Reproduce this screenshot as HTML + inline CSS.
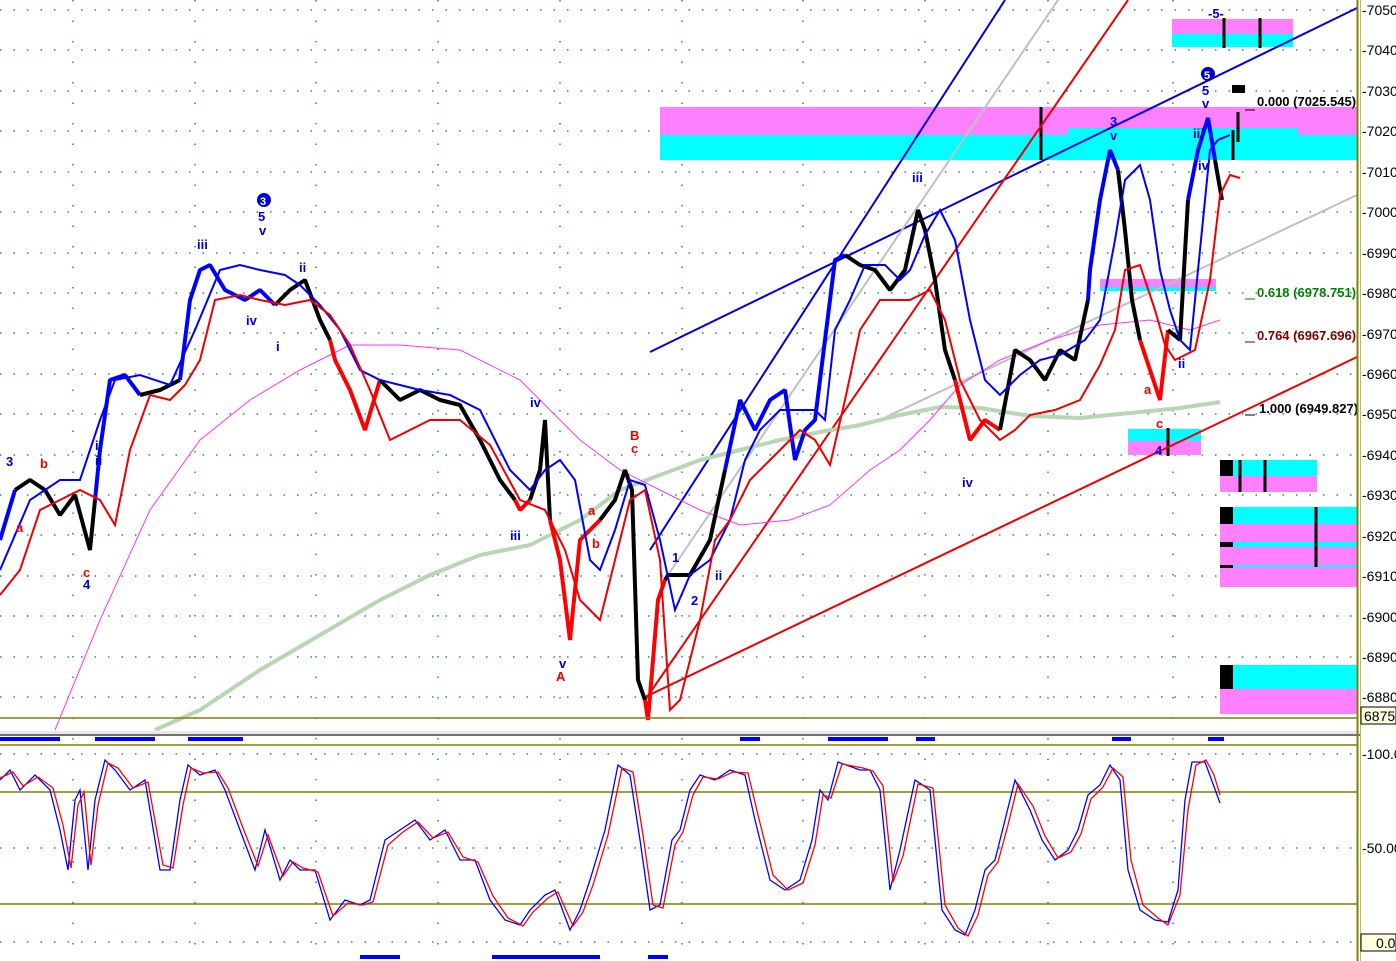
<!DOCTYPE html>
<html><head><meta charset="utf-8"><style>
html,body{margin:0;padding:0;background:#fff;}
svg{display:block;font-family:"Liberation Sans",sans-serif;}
</style></head><body>
<svg width="1396" height="961" viewBox="0 0 1396 961" xmlns="http://www.w3.org/2000/svg">
<rect width="1396" height="961" fill="#fff"/>
<g stroke="#2a8a8a" stroke-width="1.5" stroke-dasharray="1.5,12">
<line x1="0" y1="10" x2="1357" y2="10"/><line x1="0" y1="50" x2="1357" y2="50"/><line x1="0" y1="91" x2="1357" y2="91"/><line x1="0" y1="131" x2="1357" y2="131"/><line x1="0" y1="172" x2="1357" y2="172"/><line x1="0" y1="212" x2="1357" y2="212"/><line x1="0" y1="253" x2="1357" y2="253"/><line x1="0" y1="293" x2="1357" y2="293"/><line x1="0" y1="333" x2="1357" y2="333"/><line x1="0" y1="374" x2="1357" y2="374"/><line x1="0" y1="414" x2="1357" y2="414"/><line x1="0" y1="455" x2="1357" y2="455"/><line x1="0" y1="495" x2="1357" y2="495"/><line x1="0" y1="535" x2="1357" y2="535"/><line x1="0" y1="576" x2="1357" y2="576"/><line x1="0" y1="616" x2="1357" y2="616"/><line x1="0" y1="657" x2="1357" y2="657"/><line x1="0" y1="697" x2="1357" y2="697"/>
<line x1="0" y1="754" x2="1357" y2="754"/><line x1="0" y1="848" x2="1357" y2="848"/><line x1="0" y1="942" x2="1357" y2="942"/>
</g>
<g stroke="#2a8a8a" stroke-width="1.5" stroke-dasharray="1.5,19">
<line x1="73" y1="0" x2="73" y2="961"/><line x1="195" y1="0" x2="195" y2="961"/><line x1="316" y1="0" x2="316" y2="961"/><line x1="438" y1="0" x2="438" y2="961"/><line x1="560" y1="0" x2="560" y2="961"/><line x1="682" y1="0" x2="682" y2="961"/><line x1="803" y1="0" x2="803" y2="961"/><line x1="925" y1="0" x2="925" y2="961"/><line x1="1048" y1="0" x2="1048" y2="961"/><line x1="1173" y1="0" x2="1173" y2="961"/>
</g>
<rect x="660" y="107" width="697" height="28" fill="#ff80ff"/>
<rect x="660" y="135" width="697" height="25" fill="#00ffff"/>
<rect x="1068" y="128" width="230" height="8" fill="#00ffff"/>
<rect x="1172" y="19" width="121" height="15" fill="#ff80ff"/>
<rect x="1172" y="34" width="121" height="13" fill="#00ffff"/>
<rect x="1100" y="279" width="116" height="8" fill="#ff80ff"/><rect x="1100" y="287" width="116" height="4" fill="#00ffff"/>
<rect x="1128" y="429" width="73" height="12" fill="#00ffff"/><rect x="1128" y="441" width="73" height="14" fill="#ff80ff"/>
<rect x="1220" y="460" width="97" height="16" fill="#00ffff"/><rect x="1220" y="476" width="97" height="16" fill="#ff80ff"/>
<rect x="1220" y="507" width="137" height="17" fill="#00ffff"/><rect x="1220" y="524" width="137" height="18" fill="#ff80ff"/>
<rect x="1220" y="542" width="137" height="5" fill="#00ffff"/><rect x="1220" y="547" width="137" height="18" fill="#ff80ff"/>
<rect x="1220" y="565" width="137" height="2" fill="#00ffff"/><rect x="1220" y="567" width="137" height="20" fill="#ff80ff"/>
<rect x="1220" y="665" width="137" height="24" fill="#00ffff"/><rect x="1220" y="689" width="137" height="25" fill="#ff80ff"/>
<g fill="#000"><rect x="1220" y="460" width="13" height="16"/><rect x="1220" y="507" width="13" height="17"/><rect x="1220" y="542" width="13" height="5"/><rect x="1220" y="565" width="13" height="3"/><rect x="1220" y="665" width="13" height="24"/></g>
<g stroke="#000" stroke-width="3">
<line x1="1224" y1="18" x2="1224" y2="48"/><line x1="1260" y1="18" x2="1260" y2="48"/><line x1="1041" y1="107" x2="1041" y2="160"/>
<line x1="1240" y1="460" x2="1240" y2="492"/><line x1="1265" y1="460" x2="1265" y2="492"/><line x1="1316" y1="507" x2="1316" y2="567"/><line x1="1168" y1="428" x2="1168" y2="456"/>
</g>
<g fill="none" stroke-width="2">
<line x1="650" y1="352" x2="1357" y2="8" stroke="#0000e0"/>
<line x1="650" y1="550" x2="1005" y2="0" stroke="#0000e0"/>
<line x1="668" y1="575" x2="1058" y2="0" stroke="#c0c0c0"/>
<line x1="880" y1="420" x2="1357" y2="195" stroke="#c0c0c0"/>
<line x1="645" y1="700" x2="1128" y2="0" stroke="#ee0000"/>
<line x1="645" y1="697" x2="1357" y2="357" stroke="#ee0000"/>
</g>
<polyline fill="none" stroke="#b8d6b4" stroke-width="4" points="155,730 200,710 260,670 320,635 380,600 430,575 480,555 530,545 580,520 620,490 660,475 700,460 740,450 780,440 820,432 860,425 900,415 940,407 980,408 1030,416 1080,418 1130,413 1180,408 1220,402"/>
<polyline fill="none" stroke="#ff33ff" stroke-width="1" points="55,730 100,620 150,510 200,440 250,400 300,370 350,345 400,345 460,350 520,380 580,440 620,470 660,490 700,510 740,525 790,520 830,505 870,470 900,450 930,420 960,385 1000,360 1050,340 1100,325 1150,320 1190,330 1220,320"/>
<g fill="none" stroke-width="4" stroke-linejoin="bevel">
<polyline stroke="#0000ff" points="0,540 15,490"/>
<polyline stroke="#000" points="15,490 30,480 45,490 60,515 75,495 90,550 95,500"/>
<polyline stroke="#0000ff" points="95,500 100,450 110,380 125,375 140,395"/>
<polyline stroke="#000" points="140,395 160,390 180,380"/>
<polyline stroke="#0000ff" points="180,380 190,300 200,270 210,265 225,290 245,300 260,290 275,305"/>
<polyline stroke="#000" points="275,305 290,290 305,280 320,320 330,340"/>
<polyline stroke="#ff0000" points="330,340 335,360 350,390 365,430 380,380"/>
<polyline stroke="#000" points="380,380 400,400 420,390 440,400 460,405 480,440 500,480 515,500"/>
<polyline stroke="#ff0000" points="515,500 520,510 530,500"/>
<polyline stroke="#000" points="530,500 540,470 545,420 550,520"/>
<polyline stroke="#ff0000" points="550,520 560,560 570,640 580,540 600,520"/>
<polyline stroke="#000" points="600,520 615,500 625,470 632,490 638,680 645,700"/>
<polyline stroke="#ff0000" points="645,700 648,720 658,600 665,580"/>
<polyline stroke="#000" points="665,580 668,575 690,575 710,540 725,470"/>
<polyline stroke="#0000ff" points="725,470 740,400 755,430 770,400 785,390 795,460 805,430 815,420 825,340 835,260 845,255"/>
<polyline stroke="#000" points="845,255 860,265 875,270 890,290 905,270 918,210 925,230 935,280 945,350 955,380"/>
<polyline stroke="#ff0000" points="955,380 970,440 985,420 1000,430"/>
<polyline stroke="#000" points="1000,430 1015,350 1030,360 1045,380 1060,350 1075,360 1088,300"/>
<polyline stroke="#0000ff" points="1088,300 1090,270 1100,200 1110,150 1118,170"/>
<polyline stroke="#000" points="1118,170 1125,230 1132,300 1140,340"/>
<polyline stroke="#ff0000" points="1140,340 1150,370 1160,400 1168,330"/>
<polyline stroke="#000" points="1168,330 1180,340 1188,200"/>
<polyline stroke="#0000ff" points="1188,200 1198,150 1208,118 1215,160"/>
<polyline stroke="#000" points="1215,160 1222,200"/>
</g>
<g stroke="#000" stroke-width="3"><line x1="1233" y1="130" x2="1233" y2="160"/><line x1="1238" y1="112" x2="1238" y2="142"/></g>
<rect x="1232" y="85" width="13" height="8" fill="#000"/>
<polyline fill="none" stroke="#0000ff" stroke-width="2" points="0,570 30,500 60,480 80,480 100,420 115,380 140,375 170,385 195,330 220,270 240,265 260,270 285,275 300,285 320,305 340,330 360,370 380,380 400,385 420,390 450,395 480,410 510,470 530,490 545,470 560,460 575,480 590,560 600,570 615,530 630,480 645,485 660,540 675,610 690,575 710,560 730,520 745,460 760,430 780,410 800,410 815,410 825,420 835,330 850,300 865,265 885,265 900,280 910,270 925,235 940,210 955,240 970,320 985,380 1000,395 1020,375 1040,360 1060,355 1085,340 1100,320 1115,240 1125,180 1140,165 1150,200 1160,270 1170,310 1180,340 1190,350 1200,250 1210,150 1218,140 1230,135"/>
<polyline fill="none" stroke="#ee0000" stroke-width="2" points="0,595 20,570 40,510 60,500 80,490 100,500 115,525 130,450 150,395 170,400 185,385 200,360 215,300 240,295 260,300 285,305 310,300 330,315 350,345 370,390 390,440 410,430 430,420 460,420 490,445 520,500 545,510 565,550 580,600 600,620 615,560 630,500 645,490 660,560 670,710 680,700 700,620 715,540 730,520 750,480 770,460 800,430 815,440 830,465 845,400 860,330 880,300 910,300 930,290 945,320 960,380 980,420 1000,440 1015,430 1030,415 1055,410 1080,400 1100,365 1115,330 1125,270 1140,265 1155,310 1165,345 1175,360 1195,350 1210,280 1220,195 1230,175 1240,178"/>
<g font-size="13" font-weight="bold">
<text x="1257" y="106" fill="#000">0.000 (7025.545)</text>
<text x="1257" y="297" fill="#008000">0.618 (6978.751)</text>
<text x="1257" y="340" fill="#800000">0.764 (6967.696)</text>
<text x="1259" y="413" fill="#000">1.000 (6949.827)</text>
</g>
<g stroke-width="1"><line x1="1245" y1="110" x2="1255" y2="110" stroke="#000"/><line x1="1245" y1="299" x2="1255" y2="299" stroke="#008000"/><line x1="1245" y1="342" x2="1255" y2="342" stroke="#800000"/><line x1="1245" y1="415" x2="1255" y2="415" stroke="#000"/></g>
<g font-size="13" font-weight="bold" fill="#0000cc">
<text x="6" y="466">3</text><text x="83" y="589">4</text><text x="197" y="249">iii</text><text x="258" y="221">5</text><text x="259" y="235">v</text><text x="246" y="325">iv</text><text x="299" y="272">ii</text><text x="276" y="351">i</text><text x="510" y="540">iii</text><text x="530" y="407">iv</text><text x="559" y="668">v</text><text x="672" y="562">1</text><text x="691" y="605">2</text><text x="715" y="580">ii</text><text x="912" y="182">iii</text><text x="962" y="487">iv</text><text x="1110" y="126">3</text><text x="1110" y="140">v</text><text x="1202" y="95">5</text><text x="1202" y="108">v</text><text x="1193" y="138">iii</text><text x="1198" y="170">iv</text><text x="1178" y="368">ii</text><text x="1155" y="455">4</text><text x="1208" y="18">-5-</text>
<text x="95" y="450">i</text><text x="95" y="465">ii</text>
</g>
<g font-size="13" font-weight="bold" fill="#ee0000">
<text x="40" y="468">b</text><text x="16" y="532">a</text><text x="83" y="577">c</text><text x="556" y="681">A</text><text x="630" y="440">B</text><text x="631" y="453">c</text><text x="588" y="515">a</text><text x="592" y="548">b</text><text x="1144" y="394">a</text><text x="1156" y="428">c</text>
</g>
<g><circle cx="264" cy="200" r="7" fill="#0000cc"/><text x="260" y="205" font-size="11" font-weight="bold" fill="#fff">3</text>
<circle cx="1208" cy="74" r="7" fill="#0000cc"/><text x="1204" y="79" font-size="11" font-weight="bold" fill="#fff">5</text></g>
<line x1="0" y1="718" x2="1357" y2="718" stroke="#808000" stroke-width="1.5"/>
<rect x="0" y="731" width="1396" height="3" fill="#e8e8e8"/>
<line x1="0" y1="735" x2="1396" y2="735" stroke="#707070" stroke-width="2"/>
<line x1="0" y1="745" x2="1357" y2="745" stroke="#808000" stroke-width="1.5"/>
<g fill="#0000ff"><rect x="0" y="737" width="60" height="4"/><rect x="95" y="737" width="60" height="4"/><rect x="188" y="737" width="55" height="4"/><rect x="740" y="737" width="20" height="4"/><rect x="828" y="737" width="60" height="4"/><rect x="916" y="737" width="19" height="4"/><rect x="1112" y="737" width="19" height="4"/><rect x="1208" y="737" width="16" height="4"/>
<rect x="360" y="955" width="40" height="4"/><rect x="492" y="955" width="108" height="4"/><rect x="648" y="955" width="20" height="4"/></g>
<line x1="0" y1="792" x2="1357" y2="792" stroke="#808000" stroke-width="1.5"/>
<line x1="0" y1="904" x2="1357" y2="904" stroke="#808000" stroke-width="1.5"/>
<polyline fill="none" stroke="#0000ff" stroke-width="1.3" points="0,780 10,770 20,790 35,775 50,790 60,830 68,870 75,800 80,790 88,870 95,800 105,760 115,770 130,790 145,780 160,870 170,870 180,800 188,765 200,775 215,770 225,790 240,830 255,870 265,830 280,880 290,860 300,870 315,870 330,920 345,900 360,905 370,900 385,840 400,830 415,820 430,840 445,830 460,860 475,860 490,900 505,920 520,925 530,910 545,895 555,890 570,930 580,910 590,880 605,830 618,765 630,775 640,840 650,910 660,905 672,840 680,830 690,790 700,775 715,780 730,770 745,775 755,820 770,880 785,890 800,880 812,840 820,790 828,800 838,762 860,770 870,770 880,790 890,890 900,850 915,780 930,790 942,910 955,930 965,935 975,910 985,870 995,860 1005,820 1015,780 1030,810 1042,840 1055,860 1068,850 1078,830 1088,795 1100,785 1110,765 1120,780 1128,870 1140,910 1155,920 1168,922 1178,890 1185,800 1192,762 1205,762 1220,803"/>
<polyline fill="none" stroke="#ff0000" stroke-width="1.3" points="0,778 13,772 23,786 38,777 53,788 63,825 71,868 78,805 84,792 91,865 98,805 108,763 118,768 133,788 148,782 163,865 173,868 183,805 191,768 203,773 218,772 228,788 243,828 258,866 268,835 283,876 293,862 303,868 318,872 333,916 348,903 363,905 373,902 388,845 403,832 418,822 433,838 448,832 463,857 478,862 493,896 508,918 523,926 533,912 548,898 558,892 573,926 583,912 593,885 608,835 622,768 633,772 643,835 653,905 663,908 675,845 683,832 693,795 703,777 718,779 733,772 748,773 758,815 773,875 788,890 803,883 815,845 823,795 831,798 842,764 863,768 873,771 883,786 893,882 903,856 918,784 933,788 945,905 958,928 968,936 978,915 988,875 998,862 1008,825 1018,784 1033,806 1045,836 1058,858 1071,852 1081,834 1091,799 1103,787 1113,768 1123,777 1131,860 1143,905 1158,918 1168,925 1180,895 1188,810 1196,765 1206,760 1214,775 1220,795"/>
<rect x="1360" y="0" width="36" height="961" fill="#fff"/>
<line x1="1357.5" y1="0" x2="1357.5" y2="961" stroke="#808000" stroke-width="2"/>
<line x1="1360.5" y1="0" x2="1360.5" y2="961" stroke="#c0c040" stroke-width="1"/>
<g font-size="14" fill="#000">
<text x="1362" y="15">-7050</text><text x="1362" y="55">-7040</text><text x="1362" y="96">-7030</text><text x="1362" y="136">-7020</text><text x="1362" y="177">-7010</text><text x="1362" y="217">-7000</text><text x="1362" y="258">-6990</text><text x="1362" y="298">-6980</text><text x="1362" y="339">-6970</text><text x="1362" y="379">-6960</text><text x="1362" y="419">-6950</text><text x="1362" y="460">-6940</text><text x="1362" y="500">-6930</text><text x="1362" y="541">-6920</text><text x="1362" y="581">-6910</text><text x="1362" y="622">-6900</text><text x="1362" y="662">-6890</text><text x="1362" y="702">-6880</text>
<text x="1362" y="759">-100.0</text><text x="1362" y="853">-50.00</text>
</g>
<rect x="1361" y="707" width="35" height="17" fill="#ffffe0" stroke="#000" stroke-width="1"/>
<text x="1364" y="721" font-size="14" fill="#000">6875.</text>
<rect x="1361" y="934" width="35" height="17" fill="#ffffe0" stroke="#000" stroke-width="1"/>
<text x="1376" y="948" font-size="14" fill="#000">0.0</text>
</svg>
</body></html>
